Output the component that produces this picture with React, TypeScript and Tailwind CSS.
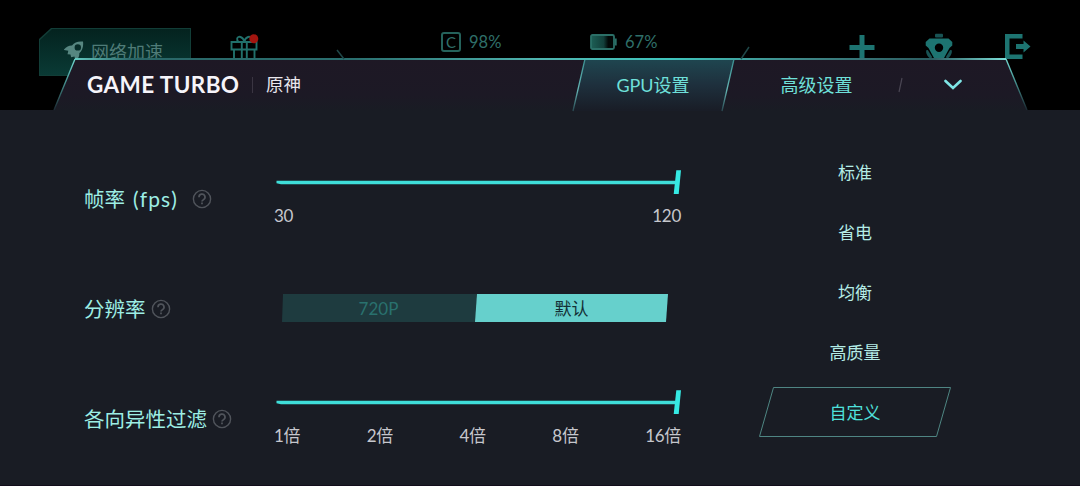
// src/components/GameTurbo.tsx
import type { ReactNode } from "react";

interface Setting {
  label: ReactNode;
  control: ReactNode;
}

function HelpIcon() {
  return (
    <svg className="mb-px h-5 w-5 shrink-0" viewBox="0 0 20 20" fill="none" stroke="#50545b" strokeWidth="1.4">
      <circle cx="10" cy="10" r="8.6" />
      <path d="M7 8.200a3 3 0 1 1 4.600 2.400c-1 .7-1.600 1.100-1.600 2" strokeWidth="1.700" />
      <path d="M10 13.600v1.700" strokeWidth="1.800" />
    </svg>
  );
}

function RocketIcon() {
  return (
    <svg className="h-[22px] w-[22px]" viewBox="0 0 22 22">
      <path
        fillRule="evenodd"
        fill="#568680"
        d="M19 1.500C13.500 1 10.500 2.500 8 5.500 5 5.300 2 7.200-.5 10l4.800.8-.8 3.400 3 .2.6 2.900 3.400-.8.8 4.200c3-2 4.200-4.400 4-7.400C18.300 10.500 19.700 6.500 19 1.500ZM13.800 4.200a3.200 3.200 0 1 1 0 6.400 3.200 3.200 0 0 1 0-6.400Z"
      />
    </svg>
  );
}

function GiftIcon() {
  return (
    <svg className="h-[30px] w-[30px]" viewBox="0 0 30 30" fill="none" stroke="#21706b" strokeWidth="1.9">
      <path d="M1.500 8h25v7.500h-25zM4 15.500V29h20.500V15.500M11.800 8v21M16.800 8v21" />
      <path d="M14.300 7.500C12.800 2.500 8 1.500 7.200 4.500c-.3 1.500.3 2.600 1.300 3.200M14.300 7.500c1.500-5 6.300-6 7.100-3" />
      <circle cx="23.800" cy="4.800" r="4.500" fill="#a3150f" stroke="none" />
    </svg>
  );
}

function BatteryIcon() {
  return (
    <svg className="h-4 w-[27px]" viewBox="0 0 27 16" fill="none">
      <defs>
        <linearGradient id="charge">
          <stop offset="0" stopColor="#1d5f56" />
          <stop offset="0.550" stopColor="#123f3a" />
          <stop offset="0.750" stopColor="#020807" />
        </linearGradient>
      </defs>
      <rect x="1" y="1" width="23" height="14" rx="1.500" fill="url(#charge)" stroke="#2b6f67" strokeWidth="1.800" />
      <path d="M25.700 4.500v7" stroke="#2b6f67" strokeWidth="2" />
    </svg>
  );
}

function GearIcon() {
  return (
    <svg className="h-[28px] w-[28px]" viewBox="0 0 28 28">
      <g fill="#185354">
        <rect x="10" y="0.800" width="8" height="3.800" rx="1" />
        <path d="M2.800 17 7.300 24.300 5.500 25.500C2 23.500.8 20 1.200 17.300ZM25.200 17 20.700 24.300 22.500 25.500C26 23.500 27.200 20 26.800 17.300Z" />
      </g>
      <path
        fillRule="evenodd"
        fill="#1d7471"
        d="M4.500 5.500H23.500L27.300 9V12.500L24.500 15 19 25V28H9V25L3.500 15 .7 12.500V9ZM14 10.600a4.200 4.200 0 1 0 0 8.400 4.200 4.200 0 0 0 0-8.400Z"
      />
    </svg>
  );
}

function StatusBar() {
  return (
    <div className="flex h-[59px] items-start bg-black text-[16.500px] leading-5 text-[#2f6f69]">
      <div className="mt-7 ml-[39px] h-12 w-[152px] shrink-0 bg-[#123d37] p-px [clip-path:polygon(12px_0,100%_0,100%_100%,0_100%,0_11px)]">
        <div className="flex h-full items-start bg-linear-to-b from-[#04231f] to-[#0a3a35] pt-[11px] pl-6 [clip-path:polygon(12px_0,100%_0,100%_100%,0_100%,0_11px)]">
          <RocketIcon />
          <span className="ml-[5px] text-[18px] leading-6 text-[#4f7b77]">网络加速</span>
        </div>
      </div>
      <div className="mt-[34px] ml-[39px] w-[30px]"><GiftIcon /></div>
      <div className="mt-8 ml-[181px] flex items-center">
        <span className="flex h-5 w-5 items-center justify-center rounded-[3px] border-2 border-[#25625b] text-[15px]">C</span>
        <span className="ml-2 w-[121px]">98%</span>
        <BatteryIcon />
        <span className="ml-2 w-8">67%</span>
      </div>
      <svg className="mt-[35px] ml-[192px] h-[26px] w-[26px]" viewBox="0 0 26 26">
        <path d="M10.500 0h5v10h10v5h-10v11h-5V15h-10v-5h10Z" fill="#1d7471" />
      </svg>
      <div className="mt-[33px] ml-[50px]"><GearIcon /></div>
      <svg className="mt-[34px] ml-[52px] h-[25px] w-[26px]" viewBox="0 0 26 25" fill="#1d7471">
        <path d="M0 0h17.500v4.500H4.500v16h13V25H0Z" />
        <path d="M11 10h7.500V6.500L25.500 12.500 18.500 18.500V15H11Z" />
      </svg>
    </div>
  );
}

function HeaderFrame() {
  return (
    <svg className="absolute top-0 left-0 h-[52px] w-[1080px] overflow-visible" viewBox="0 0 1080 52" fill="none">
      <defs>
        <linearGradient id="panel" x1="0" y1="0" x2="0" y2="1">
          <stop offset="0" stopColor="#1e1825" />
          <stop offset="0.700" stopColor="#1c1925" />
          <stop offset="1" stopColor="#191c24" />
        </linearGradient>
        <linearGradient id="edge" gradientUnits="userSpaceOnUse" x1="75" y1="0" x2="1006" y2="0">
          <stop offset="0" stopColor="#63c9c0" />
          <stop offset="0.060" stopColor="#2a6667" />
          <stop offset="0.300" stopColor="#2a6f6f" />
          <stop offset="0.500" stopColor="#4fb5b0" />
          <stop offset="0.640" stopColor="#3fc5bd" />
          <stop offset="0.780" stopColor="#3f8888" />
          <stop offset="0.920" stopColor="#2c5c60" />
          <stop offset="1" stopColor="#7de0da" />
        </linearGradient>
        <linearGradient id="side" gradientUnits="userSpaceOnUse" x1="0" y1="0" x2="0" y2="50">
          <stop offset="0" stopColor="#72d6cf" />
          <stop offset="0.400" stopColor="#4a9b98" />
          <stop offset="1" stopColor="#1c2b33" />
        </linearGradient>
        <linearGradient id="tab" gradientUnits="userSpaceOnUse" x1="0" y1="0" x2="0" y2="51">
          <stop offset="0" stopColor="#1f4650" />
          <stop offset="0.500" stopColor="#1e303d" />
          <stop offset="1" stopColor="#191d27" />
        </linearGradient>
        <linearGradient id="tabSide" gradientUnits="userSpaceOnUse" x1="0" y1="0" x2="0" y2="51">
          <stop offset="0" stopColor="#3a8f90" />
          <stop offset="0.600" stopColor="#65b5b4" />
          <stop offset="1" stopColor="#2b4c54" />
        </linearGradient>
      </defs>
      <path d="M0 51h54L75 0h931l21 51h53v1H0Z" fill="url(#panel)" />
      <path d="M585 0h149l-12 52H573Z" fill="url(#tab)" />
      <path d="M585 0 573 52M734 0l-12 52" stroke="url(#tabSide)" strokeWidth="1.300" />
      <path d="M75 0 54 51M1006 0l21 51" stroke="url(#side)" strokeWidth="1.400" />
      <path d="M75 0h931" stroke="url(#edge)" strokeWidth="2" />
      <path d="m337-9 7 9M749-12l-8 12" stroke="#1f4748" strokeWidth="1.500" />
      <path d="M252.500 18v16" stroke="#3a3542" />
      <path d="m902 19-3 14" stroke="#4a4653" strokeWidth="1.200" />
    </svg>
  );
}

function Header() {
  return (
    <div className="relative h-[51px]">
      <HeaderFrame />
      <div className="relative flex h-[52px] items-center text-[18px] text-[#6fe0da]">
        <h1 className="ml-[87px] w-[179px] text-[22.500px] font-bold tracking-[0.400px] whitespace-nowrap text-[#f6f4fa]">GAME TURBO</h1>
        <span className="w-[307px] text-[17.500px] text-[#e9e7ee]">原神</span>
        <button className="w-[160px] text-center">GPU设置</button>
        <button className="w-[167px] text-center">高级设置</button>
        <svg className="ml-11 h-3 w-[18px]" viewBox="0 0 18 12" fill="none" stroke="#7fe6e6" strokeWidth="2.600">
          <path d="m1.500 2 7.500 7L16.500 2" strokeLinecap="round" />
        </svg>
      </div>
    </div>
  );
}

function Slider({ marks }: { marks: string[] }) {
  return (
    <div className="w-[405px] pb-px">
      <svg className="block h-6 w-[405px]" viewBox="0 0 405 24">
        <path d="M.5 10.700H402v3.500H5L.5 13.200Z" fill="#3fded9" />
        <path d="M400.300.3h4.700l-2.300 23.700h-5Z" fill="#35e9e3" />
      </svg>
      <div className="mt-[10px] -ml-0.5 flex justify-between text-[17px] leading-6 tracking-[-0.300px] text-[#c6c7cd]">
        {marks.map((mark) => (
          <span key={mark}>{mark}</span>
        ))}
      </div>
    </div>
  );
}

const settings: Setting[] = [
  {
    label: (
      <>
        帧率<span className="mr-[9px] ml-2 text-[21px] tracking-[1.100px]">(fps)</span>
      </>
    ),
    control: <Slider marks={["30", "120"]} />,
  },
  {
    label: "分辨率",
    control: (
      <div className="mb-0.5 ml-1.5 flex text-center text-[17px] leading-7">
        <button className="h-7 w-[195px] bg-[#1e3b3f] pt-0.5 pr-0.5 leading-[26px] text-[#29716e] [clip-path:polygon(1px_0,100%_0,100%_100%,0_100%)]">720P</button>
        <button className="-ml-0.5 h-7 w-[193px] bg-[#66d0cc] pt-0.5 leading-[26px] text-[#143036] [clip-path:polygon(2px_0,100%_0,191px_100%,0_100%)]">默认</button>
      </div>
    ),
  },
  {
    label: "各向异性过滤",
    control: <Slider marks={["1倍", "2倍", "4倍", "8倍", "16倍"]} />,
  },
];

const modes = ["标准", "省电", "均衡", "高质量", "自定义"];

export default function App() {
  return (
    <div className="h-[486px] w-[1080px] overflow-hidden bg-black font-['Lato','Noto_Sans_CJK_SC',sans-serif]">
      <StatusBar />
      <Header />
      <div className="flex h-[376px] border-b border-[#120d1b] bg-[#191c24]">
        <div className="w-[681px] pt-[34px] pl-[84px]">
          {settings.map((setting, index) => (
            <div key={index} className="flex h-[110px] items-center">
              <div className="flex w-48 shrink-0 items-center text-[20.500px] text-[#9deee4]">
                <span className="mr-[5px] whitespace-nowrap">{setting.label}</span>
                <HelpIcon />
              </div>
              {setting.control}
            </div>
          ))}
        </div>
        <div className="ml-[78px] flex w-48 flex-col pt-[33px] text-[17px]">
          {modes.map((mode) => (
            <button key={mode} className={`relative h-[60px] ${mode === "自定义" ? "text-[#4fe0dc]" : "text-[#b4ece6]"}`}>
              {mode === "自定义" && (
                <svg className="absolute top-1 left-0 h-[50px] w-48" viewBox="0 0 192 50" fill="none">
                  <path d="M14.500.5h177l-14 49H.5Z" stroke="#4f8583" />
                </svg>
              )}
              {mode}
            </button>
          ))}
        </div>
      </div>
    </div>
  );
}
